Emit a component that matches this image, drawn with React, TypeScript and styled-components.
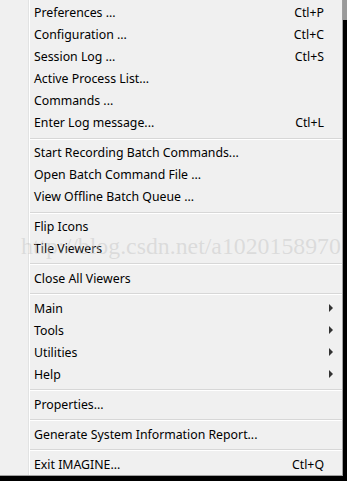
import React from "react";
import styled, { createGlobalStyle } from "styled-components";

const GlobalStyle = createGlobalStyle`
    html, body {
        margin: 0;
        padding: 0;
        background: #000;
    }
    body {
        width: 347px;
        height: 481px;
        overflow: hidden;
    }
`

const Screen = styled.div`
    width: 347px;
    height: 481px;
    position: relative;
    background: linear-gradient(to bottom, #9a9a9a 0 20px, #000 20px);
`

const Menu = styled.div`
    width: 343px;
    height: 476px;
    box-sizing: border-box;
    padding-top: 2px;
    border-right: 1px solid #a0a0a0;
    border-bottom: 1px solid #a0a0a0;
    background: linear-gradient(to right, #f0f0f0 0 28px, #e2e3e3 28px 29px, #ffffff 29px 30px, #f0f0f0 30px);
    font-family: "Noto Sans", "Open Sans", sans-serif;
    font-size: 12.3px;
    color: #000;
    display: flex;
    flex-direction: column;
`

const Row = styled.div`
    height: 22px;
    display: flex;
    align-items: center;
    padding: 0 18px 0 34px;
`

const Label = styled.span`
    flex: 1;
    white-space: nowrap;
`

const Shortcut = styled.span`
    white-space: nowrap;
`

const Arrow = styled.span`
    width: 0;
    height: 0;
    margin-right: -9px;
    border-top: 4px solid transparent;
    border-bottom: 4px solid transparent;
    border-left: 4px solid #333;
`

const Separator = styled.div`
    height: 8px;
    margin-left: 30px;
    background: linear-gradient(to bottom, transparent 0 4px, #d7d7d7 4px 5px, #ffffff 5px 6px, transparent 6px);
`

const Watermark = styled.div`
    position: absolute;
    left: 21px;
    top: 233px;
    font-family: "Liberation Serif", serif;
    font-size: 23.8px;
    color: rgba(190, 190, 190, 0.42);
    white-space: nowrap;
    pointer-events: none;
`

type Item = { label: string; shortcut?: string; sub?: boolean } | "sep";

const items: Item[] = [
    { label: "Preferences ...", shortcut: "Ctl+P" },
    { label: "Configuration ...", shortcut: "Ctl+C" },
    { label: "Session Log ...", shortcut: "Ctl+S" },
    { label: "Active Process List..." },
    { label: "Commands ..." },
    { label: "Enter Log message...", shortcut: "Ctl+L" },
    "sep",
    { label: "Start Recording Batch Commands..." },
    { label: "Open Batch Command File ..." },
    { label: "View Offline Batch Queue ..." },
    "sep",
    { label: "Flip Icons" },
    { label: "Tile Viewers" },
    "sep",
    { label: "Close All Viewers" },
    "sep",
    { label: "Main", sub: true },
    { label: "Tools", sub: true },
    { label: "Utilities", sub: true },
    { label: "Help", sub: true },
    "sep",
    { label: "Properties..." },
    "sep",
    { label: "Generate System Information Report..." },
    "sep",
    { label: "Exit IMAGINE...", shortcut: "Ctl+Q" },
];

export default function App() {
    return (
        <Screen>
            <GlobalStyle />
            <Menu>
                {items.map((item, i) =>
                    item === "sep" ? (
                        <Separator key={i} />
                    ) : (
                        <Row key={i}>
                            <Label>{item.label}</Label>
                            {item.shortcut && <Shortcut>{item.shortcut}</Shortcut>}
                            {item.sub && <Arrow />}
                        </Row>
                    )
                )}
            </Menu>
            <Watermark>http://blog.csdn.net/a1020158970</Watermark>
        </Screen>
    );
}
